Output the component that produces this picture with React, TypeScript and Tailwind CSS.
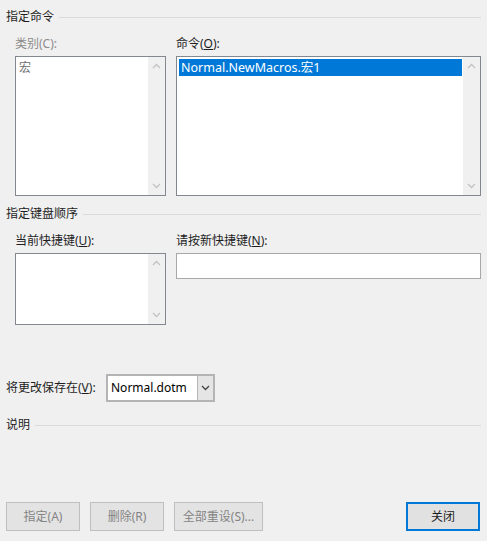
import React from 'react'

const font = { fontFamily: '"Noto Sans", "Noto Sans CJK SC", sans-serif' }

const Chevron = ({ up, dark }: { up?: boolean; dark?: boolean }) => (
    <svg width="9" height="6" viewBox="0 0 9 6" className="block">
        <polyline
            points={up ? '1,5 4.5,1.5 8,5' : '1,1 4.5,4.5 8,1'}
            fill="none"
            stroke={dark ? '#444' : '#c2c2c2'}
            strokeWidth="1.3"
        />
    </svg>
)

const SectionHeader = ({ title, className }: { title: string; className?: string }) => (
    <div className={'flex items-center h-[16px] ' + (className ?? '')}>
        <span className="text-[#1e1e1e]">{title}</span>
        <div className="flex-1 h-px bg-[#dadada] ml-[5px]" />
    </div>
)

// list box with the classic windows scrollbar strip
const ListBox = ({ className, children }: { className: string; children?: React.ReactNode }) => (
    <div className={'flex border border-[#828790] bg-white ' + className}>
        <div className="flex-1 p-[1px] overflow-hidden">{children}</div>
        <div className="w-[17px] bg-[#f0f0f0] flex flex-col justify-between items-center py-[6px]">
            <Chevron up />
            <Chevron />
        </div>
    </div>
)

const Btn = ({ label, w, primary }: { label: string; w: string; primary?: boolean }) => (
    <button
        className={
            'h-[29px] flex items-center justify-center ' +
            w +
            (primary
                ? ' border-2 border-[#0078d7] bg-[#e1e1e1] text-[#1e1e1e]'
                : ' border border-[#bfbfbf] bg-[#e3e3e3] text-[#838383]')
        }
    >
        {label}
    </button>
)

export default function App() {
    return (
        <div
            style={font}
            className="w-[487px] h-[541px] bg-[#f0f0f0] text-[12px] leading-[16px] flex flex-col px-[6px] pb-[10px]"
        >
            <SectionHeader title="指定命令" className="mt-[9px]" />

            <div className="flex pl-[9px] gap-[10px] mt-[11px]">
                <div className="w-[151px] flex flex-col">
                    <span className="text-[#8c8c8c] h-[16px]">类别(C):</span>
                    <ListBox className="mt-[4px] h-[140px]">
                        <div className="text-[#6d6d6d] pl-[2px] pt-[2px]">宏</div>
                    </ListBox>
                </div>
                <div className="w-[305px] flex flex-col">
                    <span className="text-[#1e1e1e] h-[16px]">
                        命令(<span className="underline">O</span>):
                    </span>
                    <ListBox className="mt-[4px] h-[140px]">
                        <div className="bg-[#0078d7] text-white text-[12.5px] h-[17px] leading-[17px] pl-[2px] ml-px mt-px">
                            Normal.NewMacros.宏1
                        </div>
                    </ListBox>
                </div>
            </div>

            <SectionHeader title="指定键盘顺序" className="mt-[10px]" />

            <div className="flex pl-[9px] gap-[10px] mt-[11px]">
                <div className="w-[151px] flex flex-col">
                    <span className="text-[#1e1e1e] h-[16px]">
                        当前快捷键(<span className="underline">U</span>):
                    </span>
                    <ListBox className="mt-[4px] h-[72px]" />
                </div>
                <div className="w-[305px] flex flex-col">
                    <span className="text-[#1e1e1e] h-[16px]">
                        请按新快捷键(<span className="underline">N</span>):
                    </span>
                    <div className="mt-[4px] h-[26px] border border-[#a8a8a8] bg-white" />
                </div>
            </div>

            <div className="flex items-center mt-[49px]">
                <span className="text-[#1e1e1e] w-[100px]">
                    将更改保存在(<span className="underline">V</span>):
                </span>
                <div className="w-[109px] h-[28px] border-2 border-[#b4b4b4] flex">
                    <div className="flex-1 bg-white flex items-center pl-[3px] text-[12px] text-black">
                        Normal.dotm
                    </div>
                    <div className="w-[16px] bg-[#e5e5e5] border-l border-[#b4b4b4] flex items-center justify-center">
                        <Chevron dark />
                    </div>
                </div>
            </div>

            <SectionHeader title="说明" className="mt-[15px]" />

            <div className="mt-auto flex items-center">
                <div className="flex gap-[10px]">
                    <Btn label="指定(A)" w="w-[74px]" />
                    <Btn label="删除(R)" w="w-[74px]" />
                    <Btn label="全部重设(S)..." w="w-[89px]" />
                </div>
                <div className="ml-auto mr-px">
                    <Btn label="关闭" w="w-[74px]" primary />
                </div>
            </div>
        </div>
    )
}
